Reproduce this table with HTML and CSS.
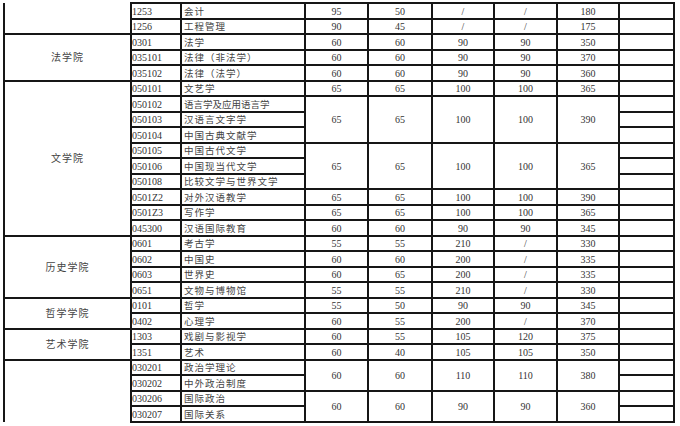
FILE: index.html
```html
<!DOCTYPE html>
<html lang="zh">
<head>
<meta charset="utf-8">
<link rel="stylesheet" href="styles.css">
</head>
<body>
<table class="score">
<colgroup>
<col class="c-col"><col class="c-code"><col class="c-name"><col class="c-n1"><col class="c-n2"><col class="c-n3"><col class="c-n4"><col class="c-n5"><col class="c-note">
</colgroup>
<tbody>
<tr><td class="college open-top" rowspan="2"></td><td class="code">1253</td><td class="name">会计</td><td>95</td><td>50</td><td>/</td><td>/</td><td>180</td><td></td></tr>
<tr><td class="code">1256</td><td class="name">工程管理</td><td>90</td><td>45</td><td>/</td><td>/</td><td>175</td><td></td></tr>

<tr><td class="college" rowspan="3">法学院</td><td class="code">0301</td><td class="name">法学</td><td>60</td><td>60</td><td>90</td><td>90</td><td>350</td><td></td></tr>
<tr><td class="code">035101</td><td class="name">法律（非法学）</td><td>60</td><td>60</td><td>90</td><td>90</td><td>370</td><td></td></tr>
<tr><td class="code">035102</td><td class="name">法律（法学）</td><td>60</td><td>60</td><td>90</td><td>90</td><td>360</td><td></td></tr>

<tr><td class="college" rowspan="10">文学院</td><td class="code">050101</td><td class="name">文艺学</td><td>65</td><td>65</td><td>100</td><td>100</td><td>365</td><td></td></tr>
<tr><td class="code">050102</td><td class="name tight">语言学及应用语言学</td><td rowspan="3">65</td><td rowspan="3">65</td><td rowspan="3">100</td><td rowspan="3">100</td><td rowspan="3">390</td><td></td></tr>
<tr><td class="code">050103</td><td class="name">汉语言文字学</td><td></td></tr>
<tr><td class="code">050104</td><td class="name">中国古典文献学</td><td></td></tr>
<tr><td class="code">050105</td><td class="name">中国古代文学</td><td rowspan="3">65</td><td rowspan="3">65</td><td rowspan="3">100</td><td rowspan="3">100</td><td rowspan="3">365</td><td></td></tr>
<tr><td class="code">050106</td><td class="name">中国现当代文学</td><td></td></tr>
<tr><td class="code">050108</td><td class="name">比较文学与世界文学</td><td></td></tr>
<tr><td class="code">0501Z2</td><td class="name">对外汉语教学</td><td>65</td><td>65</td><td>100</td><td>100</td><td>390</td><td></td></tr>
<tr><td class="code">0501Z3</td><td class="name">写作学</td><td>65</td><td>65</td><td>100</td><td>100</td><td>365</td><td></td></tr>
<tr><td class="code">045300</td><td class="name">汉语国际教育</td><td>60</td><td>60</td><td>90</td><td>90</td><td>345</td><td></td></tr>

<tr><td class="college" rowspan="4">历史学院</td><td class="code">0601</td><td class="name">考古学</td><td>55</td><td>55</td><td>210</td><td>/</td><td>330</td><td></td></tr>
<tr><td class="code">0602</td><td class="name">中国史</td><td>60</td><td>60</td><td>200</td><td>/</td><td>335</td><td></td></tr>
<tr><td class="code">0603</td><td class="name">世界史</td><td>60</td><td>65</td><td>200</td><td>/</td><td>335</td><td></td></tr>
<tr><td class="code">0651</td><td class="name">文物与博物馆</td><td>55</td><td>55</td><td>210</td><td>/</td><td>330</td><td></td></tr>

<tr><td class="college" rowspan="2">哲学学院</td><td class="code">0101</td><td class="name">哲学</td><td>55</td><td>50</td><td>90</td><td>90</td><td>345</td><td></td></tr>
<tr><td class="code">0402</td><td class="name">心理学</td><td>60</td><td>55</td><td>200</td><td>/</td><td>370</td><td></td></tr>

<tr><td class="college" rowspan="2">艺术学院</td><td class="code">1303</td><td class="name">戏剧与影视学</td><td>60</td><td>55</td><td>105</td><td>120</td><td>375</td><td></td></tr>
<tr><td class="code">1351</td><td class="name">艺术</td><td>60</td><td>40</td><td>105</td><td>105</td><td>350</td><td></td></tr>

<tr><td class="college open-bottom" rowspan="4"></td><td class="code">030201</td><td class="name">政治学理论</td><td rowspan="2">60</td><td rowspan="2">60</td><td rowspan="2">110</td><td rowspan="2">110</td><td rowspan="2">380</td><td></td></tr>
<tr><td class="code">030202</td><td class="name">中外政治制度</td><td></td></tr>
<tr><td class="code">030206</td><td class="name">国际政治</td><td rowspan="2">60</td><td rowspan="2">60</td><td rowspan="2">90</td><td rowspan="2">90</td><td rowspan="2">360</td><td></td></tr>
<tr><td class="code">030207</td><td class="name">国际关系</td><td></td></tr>
</tbody>
</table>
</body>
</html>
```

FILE: styles.css
```css
html, body {
  margin: 0;
  padding: 0;
  background: #ffffff;
}

body {
  width: 680px;
  height: 426px;
  overflow: hidden;
}

.score {
  margin: 2px 0 0 3px;
  border-collapse: collapse;
  table-layout: fixed;
  width: 671px;
  font-family: "Liberation Serif", "Noto Sans CJK SC", serif;
  font-size: 10px;
  color: #333333;
}

.c-col { width: 127px; }
.c-code { width: 50px; }
.c-name { width: 124px; }
.c-n1 { width: 63px; }
.c-n2 { width: 64px; }
.c-n3 { width: 62px; }
.c-n4 { width: 63px; }
.c-n5 { width: 62px; }
.c-note { width: 55px; }

.score tr {
  height: 15.5px;
}

.score td {
  border: 2px solid #161616;
  padding: 2px 0 0 0;
  line-height: 10px;
  text-align: center;
  vertical-align: middle;
  white-space: nowrap;
  overflow: hidden;
}

.score td.code {
  text-align: left;
  padding-left: 0;
}

.score td.name {
  text-align: left;
  padding-left: 2px;
  letter-spacing: 1px;
  font-size: 9.5px;
  color: #444444;
}

.score td.name.tight {
  letter-spacing: 0;
}

.score td.college {
  letter-spacing: 1px;
  font-size: 10px;
  color: #444444;
}

.score td.open-top {
  border-top: none;
}

.score td.open-bottom {
  border-bottom: none;
}
```
